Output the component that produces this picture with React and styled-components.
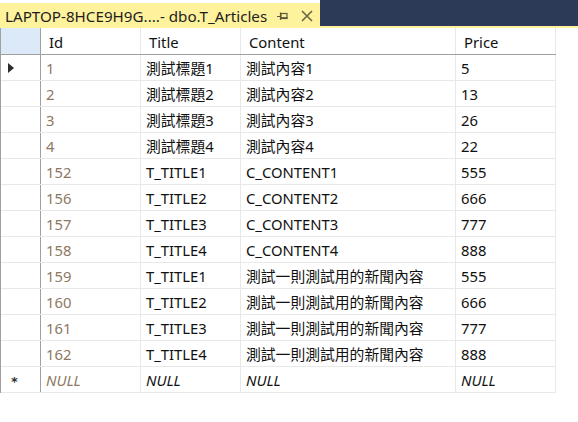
import React from "react";
import styled, { createGlobalStyle } from "styled-components";

const GlobalStyle = createGlobalStyle`
  html, body {
    margin: 0;
    padding: 0;
    background: #ffffff;
  }
  body {
    font-family: "Noto Sans", "Noto Sans CJK TC", sans-serif;
  }
`;

const Page = styled.div`
  width: 578px;
  height: 422px;
  overflow: hidden;
  background: #ffffff;
`;

const TabBar = styled.div`
  display: flex;
  height: 28px;
  background: #2c3a58;
  box-shadow: inset 0 -2px 0 #fff29d;
`;

const Tab = styled.div`
  display: flex;
  align-items: center;
  box-sizing: border-box;
  width: 320px;
  border-top: 3px solid #ffffff;
  background: #fff29d;
  padding: 0 0 0 5px;
  font-size: 15.2px;
  color: #1e1e1e;
  white-space: nowrap;
`;

const TabTitle = styled.span`
  flex: 1;
  line-height: 20px;
`;

const TabButton = styled.span`
  display: flex;
  align-items: center;
  justify-content: center;
  width: ${(p) => p.$w}px;
  height: 20px;
`;

const Grid = styled.div`
  width: 556px;
  box-sizing: border-box;
  border-left: 1px solid #a0a0a0;
`;

const Row = styled.div`
  display: grid;
  grid-template-columns: 40px 100px 100px 215px 100px;
  height: ${(p) => (p.$header ? 27 : 26)}px;
  box-sizing: border-box;
  border-bottom: 1px solid ${(p) => (p.$header ? "#a0a0a0" : "#e8e8e8")};
`;

const RowHead = styled.div`
  display: flex;
  align-items: center;
  box-sizing: border-box;
  padding-left: ${(p) => (p.$star ? 10 : 7)}px;
  background: ${(p) => (p.$header ? "#dbe9f8" : "#ffffff")};
  border-right: 1px solid #a0a0a0;
`;

const Cell = styled.div`
  display: flex;
  align-items: center;
  box-sizing: border-box;
  padding: 1px 0 0 ${(p) => (p.$header ? 8 : 5)}px;
  border-right: 1px solid #e8e8e8;
  font-size: 14.8px;
  line-height: 20px;
  white-space: nowrap;
  overflow: hidden;
  color: ${(p) => (p.$id ? "#8d7863" : "#111111")};
  font-style: ${(p) => (p.$null ? "italic" : "normal")};
`;

const Triangle = styled.span`
  width: 0;
  height: 0;
  border-top: 5px solid transparent;
  border-bottom: 5px solid transparent;
  border-left: 6px solid #2b2b2b;
  margin-top: 1px;
`;

const Star = styled.span`
  font-family: "DejaVu Sans", sans-serif;
  font-size: 13px;
  font-weight: bold;
  color: #2e2e2e;
  margin-top: 3px;
`;

const NEWS = "測試一則測試用的新聞內容";

const rows = [
  ["1", "測試標題1", "測試內容1", "5"],
  ["2", "測試標題2", "測試內容2", "13"],
  ["3", "測試標題3", "測試內容3", "26"],
  ["4", "測試標題4", "測試內容4", "22"],
  ["152", "T_TITLE1", "C_CONTENT1", "555"],
  ["156", "T_TITLE2", "C_CONTENT2", "666"],
  ["157", "T_TITLE3", "C_CONTENT3", "777"],
  ["158", "T_TITLE4", "C_CONTENT4", "888"],
  ["159", "T_TITLE1", NEWS, "555"],
  ["160", "T_TITLE2", NEWS, "666"],
  ["161", "T_TITLE3", NEWS, "777"],
  ["162", "T_TITLE4", NEWS, "888"],
];

function PinIcon() {
  return (
    <svg width="12" height="10" viewBox="0 0 12 10">
      <path d="M0 5.5 H3.5 M3.5 1.5 V9" stroke="#5e5a3c" strokeWidth="1.2" fill="none" />
      <rect x="4" y="2.5" width="6" height="5" fill="none" stroke="#5e5a3c" strokeWidth="1.2" />
      <path d="M4 6.8 H10.6" stroke="#5e5a3c" strokeWidth="1.4" />
    </svg>
  );
}

function CloseIcon() {
  return (
    <svg width="12" height="12" viewBox="0 0 12 12">
      <path d="M1 1 L11 11 M11 1 L1 11" stroke="#6a6646" strokeWidth="1.6" fill="none" />
    </svg>
  );
}

export default function App() {
  return (
    <Page>
      <GlobalStyle />
      <TabBar>
        <Tab>
          <TabTitle>LAPTOP-8HCE9H9G....- dbo.T_Articles</TabTitle>
          <TabButton $w={22}>
            <PinIcon />
          </TabButton>
          <TabButton $w={26}>
            <CloseIcon />
          </TabButton>
        </Tab>
      </TabBar>
      <Grid>
        <Row $header>
          <RowHead $header />
          <Cell $header>Id</Cell>
          <Cell $header>Title</Cell>
          <Cell $header>Content</Cell>
          <Cell $header>Price</Cell>
        </Row>
        {rows.map((r, i) => (
          <Row key={r[0]}>
            <RowHead>{i === 0 && <Triangle />}</RowHead>
            <Cell $id>{r[0]}</Cell>
            <Cell>{r[1]}</Cell>
            <Cell>{r[2]}</Cell>
            <Cell>{r[3]}</Cell>
          </Row>
        ))}
        <Row>
          <RowHead $star>
            <Star>*</Star>
          </RowHead>
          <Cell $id $null>NULL</Cell>
          <Cell $null>NULL</Cell>
          <Cell $null>NULL</Cell>
          <Cell $null>NULL</Cell>
        </Row>
      </Grid>
    </Page>
  );
}
